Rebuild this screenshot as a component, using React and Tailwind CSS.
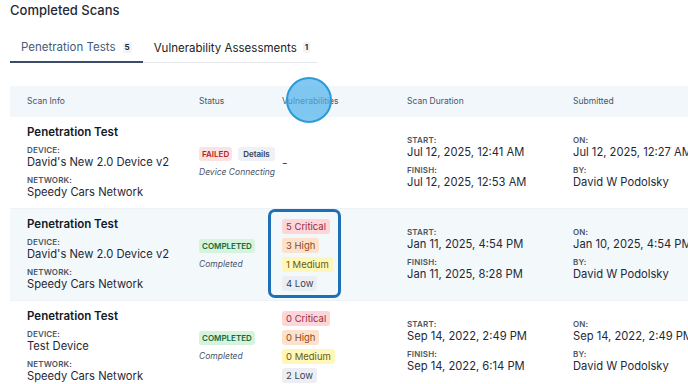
import React from 'react';

const rows = [
  {
    device: "David's New 2.0 Device v2",
    network: 'Speedy Cars Network',
    status: 'failed',
    note: 'Device Connecting',
    vulns: null,
    start: 'Jul 12, 2025, 12:41 AM',
    finish: 'Jul 12, 2025, 12:53 AM',
    on: 'Jul 12, 2025, 12:27 AM',
    by: 'David W Podolsky',
  },
  {
    device: "David's New 2.0 Device v2",
    network: 'Speedy Cars Network',
    status: 'completed',
    note: 'Completed',
    vulns: [5, 3, 1, 4],
    start: 'Jan 11, 2025, 4:54 PM',
    finish: 'Jan 11, 2025, 8:28 PM',
    on: 'Jan 10, 2025, 4:54 PM',
    by: 'David W Podolsky',
    highlight: true,
    shaded: true,
  },
  {
    device: 'Test Device',
    network: 'Speedy Cars Network',
    status: 'completed',
    note: 'Completed',
    vulns: [0, 0, 0, 2],
    start: 'Sep 14, 2022, 2:49 PM',
    finish: 'Sep 14, 2022, 6:14 PM',
    on: 'Sep 14, 2022, 2:49 PM',
    by: 'David W Podolsky',
  },
];

const Label = ({ children }) => (
  <div className="text-[8px] font-semibold uppercase leading-[10px] text-[#4b5563] tracking-[0.02em]">{children}</div>
);

const Value = ({ children }) => (
  <div className="text-[11.2px] leading-[15px] text-[#1f2937]">{children}</div>
);

const Vulns = ({ counts, highlight }) => {
  const [c, h, m, l] = counts;
  return (
    <div className="relative flex h-full flex-col items-start justify-center gap-[4px]">
      {highlight && (
        <div className="absolute -left-[14px] top-0 bottom-[2px] w-[73px] rounded-[7px] border-[3px] border-[#1d6fb8]" />
      )}
      <span className="rounded-[3px] bg-[#fcd6d9] px-[4px] py-[1px] text-[9.5px] leading-[13px] text-[#9b2c3a]">{c} Critical</span>
      <span className="rounded-[3px] bg-[#fde1cb] px-[4px] py-[1px] text-[9.5px] leading-[13px] text-[#8a4a1a]">{h} High</span>
      <span className="rounded-[3px] bg-[#fef7b9] px-[4px] py-[1px] text-[9.5px] leading-[13px] text-[#6b5a10]">{m} Medium</span>
      <span className="rounded-[3px] bg-[#eceef3] px-[4px] py-[1px] text-[9.5px] leading-[13px] text-[#374151]">{l} Low</span>
    </div>
  );
};

export default function App() {
  return (
    <div className="h-[384px] w-[688px] overflow-hidden bg-white font-['Inter',sans-serif] text-[#1f2937]">
      <h1 className="px-[10px] pt-[1px] text-[13px] font-medium leading-[18px] text-[#1f2937]">Completed Scans</h1>

      <div className="mt-[18px] ml-[10px] flex w-[308px] whitespace-nowrap border-b border-[#e5e7eb]">
        <div className="-mb-px flex shrink-0 items-center gap-[7px] border-b-2 border-[#3b4b69] px-[11px] pb-[6px] pt-[2px]">
          <span className="text-[11.5px] leading-[16px] text-[#475a7a]">Penetration Tests</span>
          <span className="rounded-[2px] bg-[#f1f3f5] px-[2px] text-[8px] font-bold leading-[11px] text-[#1f2937]">5</span>
        </div>
        <div className="flex shrink-0 items-center gap-[6px] px-[11px] pb-[6px] pt-[2px]">
          <span className="text-[11.5px] leading-[16px] text-[#222]">Vulnerability Assessments</span>
          <span className="rounded-[2px] bg-[#f1f3f5] px-[2px] text-[8px] font-bold leading-[11px] text-[#1f2937]">1</span>
        </div>
      </div>

      <div className="ml-[10px] mt-[23px] w-[700px]">
        <div className="relative grid h-[31px] grid-cols-[172px_83px_125px_166px_1fr] items-center bg-[#f2f7fb] pl-[17px] text-[8.5px] text-[#4b5563]">
          <span>Scan Info</span>
          <span>Status</span>
          <span className="relative">
            Vulnerabilities
            <span className="absolute left-[4px] -top-[18px] h-[46px] w-[46px] rounded-full border-2 border-[#2b9ad9] bg-[#4fb0ec]/70" />
          </span>
          <span>Scan Duration</span>
          <span>Submitted</span>
        </div>

        {rows.map((r, i) => (
          <div
            key={i}
            className={`grid h-[92px] grid-cols-[172px_83px_125px_166px_1fr] border-b border-[#eef2f6] pl-[17px] ${r.shaded ? 'bg-[#f3f8fb]' : 'bg-white'}`}
          >
            <div className="flex flex-col justify-center">
              <div className="mb-[5px] text-[11.5px] font-semibold leading-[15px] text-[#111827]">Penetration Test</div>
              <Label>Device:</Label>
              <div className="mb-[5px]"><Value>{r.device}</Value></div>
              <Label>Network:</Label>
              <Value>{r.network}</Value>
            </div>

            <div className="flex flex-col justify-center">
              <div className="flex items-center gap-[6px]">
                {r.status === 'failed' ? (
                  <>
                    <span className="rounded-[3px] bg-[#fde2e3] px-[3px] text-[8px] font-semibold leading-[14px] text-[#b42323]">FAILED</span>
                    <span className="rounded-[3px] bg-[#eef1f5] px-[5px] text-[8px] font-semibold leading-[14px] text-[#374151]">Details</span>
                  </>
                ) : (
                  <span className="rounded-[3px] bg-[#d6f3dd] px-[3px] text-[8px] font-semibold leading-[14px] text-[#17693a]">COMPLETED</span>
                )}
              </div>
              <div className="mt-[5px] text-[8.5px] italic leading-[12px] text-[#4b5563]">{r.note}</div>
            </div>

            <div className={`flex ${r.vulns ? 'items-stretch' : 'items-center'}`}>
              {r.vulns ? (
                <Vulns counts={r.vulns} highlight={r.highlight} />
              ) : (
                <span className="text-[12px] text-[#374151]">-</span>
              )}
            </div>

            <div className="flex flex-col justify-center whitespace-nowrap">
              <Label>Start:</Label>
              <div className="mb-[5px]"><Value>{r.start}</Value></div>
              <Label>Finish:</Label>
              <Value>{r.finish}</Value>
            </div>

            <div className="flex flex-col justify-center whitespace-nowrap">
              <Label>On:</Label>
              <div className="mb-[5px]"><Value>{r.on}</Value></div>
              <Label>By:</Label>
              <Value>{r.by}</Value>
            </div>
          </div>
        ))}
      </div>
    </div>
  );
}
